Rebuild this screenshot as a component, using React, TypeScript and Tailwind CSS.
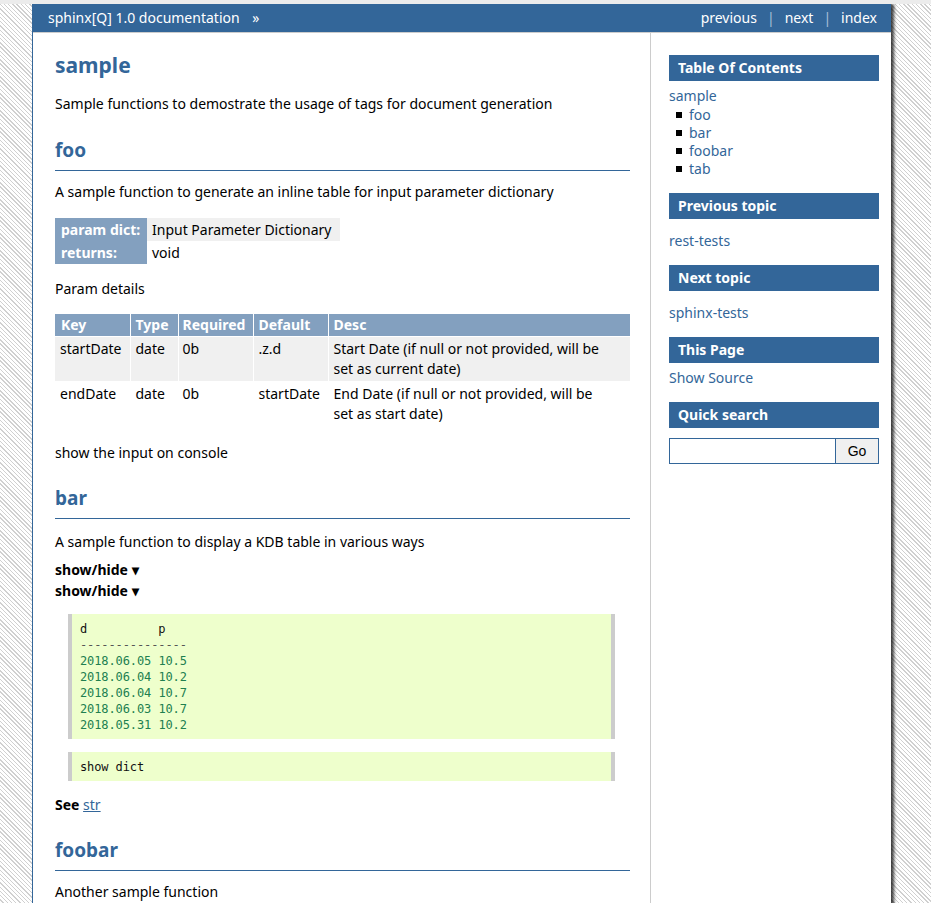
const SANS = "font-['Noto_Sans',sans-serif]";
const MONO = "font-['DejaVu_Sans_Mono',monospace]";

function SideBox({ title }: { title: string }) {
  return (
    <h3 className="h-[26px] bg-[#336699] pl-[9px] text-[14px] font-bold leading-[26px] text-white">
      {title}
    </h3>
  );
}

function Section({ title, first }: { title: string; first?: boolean }) {
  return (
    <h2
      className={`${first ? 'mt-[24px]' : 'mt-[23px]'} border-b border-[#336699] pb-[8px] text-[19px] font-bold leading-[24px] text-[#336699]`}
    >
      {title}
    </h2>
  );
}

const rows = [
  { d: '2018.06.05', p: '10.5' },
  { d: '2018.06.04', p: '10.2' },
  { d: '2018.06.04', p: '10.7' },
  { d: '2018.06.03', p: '10.7' },
  { d: '2018.05.31', p: '10.2' },
];

const params = [
  {
    key: 'startDate',
    type: 'date',
    req: '0b',
    def: '.z.d',
    desc: 'Start Date (if null or not provided, will be set as current date)',
  },
  {
    key: 'endDate',
    type: 'date',
    req: '0b',
    def: 'startDate',
    desc: 'End Date (if null or not provided, will be set as start date)',
  },
];

export default function App() {
  return (
    <div
      className={`${SANS} h-screen overflow-hidden border-t-4 border-[#ececec] bg-[repeating-linear-gradient(45deg,#ffffff_0px,#ffffff_2px,#d0d0d0_2px,#d0d0d0_3px)] text-[14px] text-black`}
    >
      <div className="ml-[32px] flex min-h-[1100px] w-[859px] flex-col border-l border-[#336699] bg-white shadow-[3px_0_3px_rgba(0,0,0,0.75)]">
        {/* top bar */}
        <div className="flex h-[29px] items-center justify-between border-b border-[#cccccc] bg-[#336699] pb-[2px] pl-[15px] pr-[14px] text-[14px] text-white">
          <div>
            sphinx[Q] 1.0 documentation <span className="ml-[9px]">»</span>
          </div>
          <div className="flex items-center">
            <span>previous</span>
            <span className="mx-[10px] text-[#a9c0d8]">|</span>
            <span>next</span>
            <span className="mx-[10px] text-[#a9c0d8]">|</span>
            <span>index</span>
          </div>
        </div>

        <div className="flex flex-1">
          {/* main */}
          <div className="w-[617px] pl-[22px] pr-[20px] pt-[19px] leading-[20px]">
            <h1 className="text-[21px] font-bold leading-[26px] text-[#336699]">sample</h1>
            <p className="mt-[16px]">
              Sample functions to demostrate the usage of tags for document generation
            </p>

            <Section title="foo" first />
            <p className="mt-[11px]">
              A sample function to generate an inline table for input parameter dictionary
            </p>

            <table className="mt-[16px] border-collapse">
              <tbody>
                <tr className="h-[23px]">
                  <th className="w-[92px] bg-[#83a0bf] pl-[6px] text-left font-bold text-white">
                    param dict:
                  </th>
                  <td className="bg-[#f0f0f0] pl-[5px] pr-[8px]">Input Parameter Dictionary</td>
                </tr>
                <tr className="h-[23px]">
                  <th className="bg-[#83a0bf] pl-[6px] text-left font-bold text-white">returns:</th>
                  <td className="pl-[5px]">void</td>
                </tr>
              </tbody>
            </table>

            <p className="mt-[15px]">Param details</p>

            <table className="mt-[15px] w-full border-collapse">
              <thead>
                <tr className="h-[22px] bg-[#83a0bf] text-left text-white">
                  <th className="w-[75px] border-r border-white pl-[6px] font-bold">Key</th>
                  <th className="w-[48px] border-r border-white pl-[5px] font-bold">Type</th>
                  <th className="w-[75px] border-r border-white pl-[4px] font-bold">Required</th>
                  <th className="w-[75px] border-r border-white pl-[5px] font-bold">Default</th>
                  <th className="pl-[5px] font-bold">Desc</th>
                </tr>
              </thead>
              <tbody>
                {params.map((r, i) => (
                  <tr
                    key={r.key}
                    className={`border-t border-white align-top ${i === 0 ? 'bg-[#f0f0f0]' : 'bg-white'}`}
                  >
                    <td className="border-r border-white py-[2px] pl-[5px]">{r.key}</td>
                    <td className="border-r border-white py-[2px] pl-[5px]">{r.type}</td>
                    <td className="border-r border-white py-[2px] pl-[4px]">{r.req}</td>
                    <td className="border-r border-white py-[2px] pl-[5px]">{r.def}</td>
                    <td className="py-[2px] pl-[5px] pr-[18px]">{r.desc}</td>
                  </tr>
                ))}
              </tbody>
            </table>

            <p className="mt-[17px]">show the input on console</p>

            <Section title="bar" />
            <p className="mt-[13px]">A sample function to display a KDB table in various ways</p>
            <div className="mt-[7px] font-bold leading-[21px]">
              <div>show/hide ▾</div>
              <div>show/hide ▾</div>
            </div>

            <div className="ml-[13px] mr-[15px]">
              <pre
                className={`${MONO} mt-[13px] border-x-4 border-[#cccccc] bg-[#eeffcc] pb-[6px] pl-[8px] pt-[7px] text-[12px] leading-[16px] tracking-[-0.1px] text-[#111]`}
              >
                <div>{'d          p'}</div>
                <div className="text-[#555]">---------------</div>
                {rows.map((r, i) => (
                  <div key={i} className="text-[#208050]">
                    {r.d} {r.p}
                  </div>
                ))}
              </pre>
              <pre
                className={`${MONO} mt-[13px] border-x-4 border-[#cccccc] bg-[#eeffcc] pb-[6px] pl-[8px] pt-[7px] text-[12px] leading-[16px] tracking-[-0.1px] text-[#111]`}
              >
                show dict
              </pre>
            </div>

            <p className="mt-[14px]">
              <span className="font-bold">See</span>{' '}
              <a className="text-[#336699] underline">str</a>
            </p>

            <Section title="foobar" />
            <p className="mt-[11px]">Another sample function</p>
            <p className="mt-[10px]">Returns a dictionary of sample values</p>
          </div>

          {/* sidebar */}
          <div className="w-[240px] border-l border-[#cccccc] pl-[18px] pr-[11px] pt-[22px] leading-[18px] text-[#336699]">
            <SideBox title="Table Of Contents" />
            <div className="mt-[6px]">sample</div>
            <ul className="mt-[1px]">
              {['foo', 'bar', 'foobar', 'tab'].map((t) => (
                <li key={t} className="flex items-center">
                  <span className="ml-[7px] mr-[7px] h-[6px] w-[6px] bg-black" />
                  {t}
                </li>
              ))}
            </ul>

            <div className="mt-[15px]">
              <SideBox title="Previous topic" />
            </div>
            <div className="mt-[13px]">rest-tests</div>

            <div className="mt-[15px]">
              <SideBox title="Next topic" />
            </div>
            <div className="mt-[13px]">sphinx-tests</div>

            <div className="mt-[15px]">
              <SideBox title="This Page" />
            </div>
            <div className="mt-[6px]">Show Source</div>

            <div className="mt-[15px]">
              <SideBox title="Quick search" />
            </div>
            <div className="mt-[10px] flex h-[26px]">
              <input className="h-full w-[167px] border border-[#336699] bg-white outline-none" />
              <button className="h-full flex-1 border border-l-0 border-[#336699] bg-[#f0f0f0] font-['Liberation_Sans',sans-serif] text-[14px] text-black">
                Go
              </button>
            </div>
          </div>
        </div>
      </div>
    </div>
  );
}
